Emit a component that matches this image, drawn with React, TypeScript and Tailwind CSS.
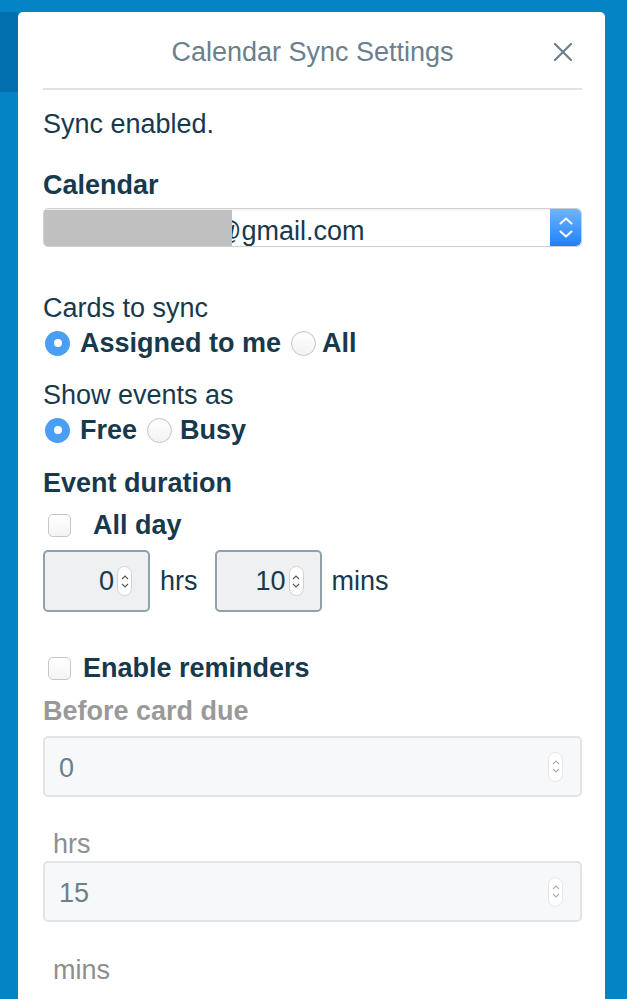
import React from "react";

const Spinner = ({ muted = false }: { muted?: boolean }) => (
  <div
    className={`flex h-[30px] w-[15px] flex-col items-center justify-center gap-[3px] rounded-full border ${
      muted ? "border-[#e4e6e8] bg-white" : "border-[#cfd3d6] bg-white"
    }`}
  >
    <svg width="8" height="5" viewBox="0 0 8 5">
      <path d="M1 4 L4 1 L7 4" fill="none" stroke={muted ? "#a8adb1" : "#555"} strokeWidth="1.1" />
    </svg>
    <svg width="8" height="5" viewBox="0 0 8 5">
      <path d="M1 1 L4 4 L7 1" fill="none" stroke={muted ? "#a8adb1" : "#555"} strokeWidth="1.1" />
    </svg>
  </div>
);

const Radio = ({ checked }: { checked: boolean }) =>
  checked ? (
    <div className="flex h-[25px] w-[25px] shrink-0 items-center justify-center rounded-full bg-[#4a9ff5]">
      <div className="h-[8px] w-[8px] rounded-full bg-white" />
    </div>
  ) : (
    <div className="h-[25px] w-[25px] shrink-0 rounded-full border border-[#c4c4c4] bg-gradient-to-b from-[#ffffff] to-[#f2f2f2] shadow-[inset_0_1px_1px_rgba(0,0,0,0.05)]" />
  );

const Checkbox = () => (
  <div className="h-[23px] w-[23px] shrink-0 rounded-[5px] border border-[#c6c6c6] bg-gradient-to-b from-[#ffffff] to-[#f4f4f4]" />
);

export default function App() {
  return (
    <div
      className="relative h-[999px] w-[627px] overflow-hidden bg-[#0584c5]"
      style={{ fontFamily: '"Liberation Sans", Arial, sans-serif' }}
    >
      <div className="absolute left-0 top-[12px] h-[80px] w-[18px] bg-[#0270ae]" />
      <div className="relative ml-[18px] mt-[12px] h-[1100px] w-[587px] rounded-[5px] bg-white pl-[25px] pr-[23px] text-[27px] text-[#17394d]">
        {/* header */}
        <div className="relative flex h-[78px] items-center justify-center border-b-2 border-[#dfe3e6]">
          <div className="mt-[4px] text-[27px] leading-[34px] text-[#6b808c]">Calendar Sync Settings</div>
          <svg
            className="absolute right-[10px] top-[31px]"
            width="18"
            height="18"
            viewBox="0 0 18 18"
          >
            <path d="M1 1 L17 17 M17 1 L1 17" stroke="#6b808c" strokeWidth="2.2" strokeLinecap="round" />
          </svg>
        </div>

        <div className="mt-[17px] h-[34px] leading-[34px]">Sync enabled.</div>

        <div className="mt-[27px] h-[34px] font-bold leading-[34px]">Calendar</div>

        <div className="mt-[6px] flex h-[39px] overflow-hidden rounded-[5px] border border-[#cfcfcf] bg-white shadow-[inset_0_1px_2px_rgba(0,0,0,0.08)]">
          <div className="relative flex flex-1 items-center">
            <span className="ml-[170px] pt-[6px] leading-[36px]">@gmail.com</span>
            <div className="absolute left-0 top-[1px] h-[36px] w-[188px] bg-[#c0c0c0]" />
          </div>
          <div className="flex w-[31px] flex-col items-center justify-center gap-[5px] rounded-r-[5px] bg-gradient-to-b from-[#6db4fa] to-[#1a80fb]">
            <svg width="14" height="8" viewBox="0 0 14 8">
              <path d="M1.5 6.5 L7 1.5 L12.5 6.5" fill="none" stroke="white" strokeWidth="2" strokeLinecap="round" strokeLinejoin="round" />
            </svg>
            <svg width="14" height="8" viewBox="0 0 14 8">
              <path d="M1.5 1.5 L7 6.5 L12.5 1.5" fill="none" stroke="white" strokeWidth="2" strokeLinecap="round" strokeLinejoin="round" />
            </svg>
          </div>
        </div>

        <div className="mt-[44px] h-[34px] leading-[34px]">Cards to sync</div>
        <div className="mt-[1px] flex h-[34px] items-center pl-[2px] font-bold">
          <Radio checked />
          <span className="ml-[10px]">Assigned to me</span>
          <span className="ml-[10px]">
            <Radio checked={false} />
          </span>
          <span className="ml-[6px]">All</span>
        </div>

        <div className="mt-[18px] h-[34px] leading-[34px]">Show events as</div>
        <div className="mt-[1px] flex h-[34px] items-center pl-[2px] font-bold">
          <Radio checked />
          <span className="ml-[10px]">Free</span>
          <span className="ml-[10px]">
            <Radio checked={false} />
          </span>
          <span className="ml-[8px]">Busy</span>
        </div>

        <div className="mt-[19px] h-[34px] font-bold leading-[34px]">Event duration</div>
        <div className="mt-[8px] flex h-[34px] items-center pl-[5px] font-bold">
          <Checkbox />
          <span className="ml-[22px]">All day</span>
        </div>

        <div className="mt-[8px] flex items-center">
          <div className="flex h-[62px] w-[107px] items-center justify-end rounded-[5px] border-2 border-[#8fa1ac] bg-[#eef0f2] pr-[16px]">
            <span className="mr-[3px]">0</span>
            <Spinner />
          </div>
          <span className="ml-[10px]">hrs</span>
          <div className="ml-[17px] flex h-[62px] w-[107px] items-center justify-end rounded-[5px] border-2 border-[#8fa1ac] bg-[#eef0f2] pr-[16px]">
            <span className="mr-[3px]">10</span>
            <Spinner />
          </div>
          <span className="ml-[10px]">mins</span>
        </div>

        <div className="mt-[39px] flex h-[34px] items-center pl-[5px] font-bold">
          <Checkbox />
          <span className="ml-[12px]">Enable reminders</span>
        </div>

        <div className="mt-[9px] h-[34px] font-bold leading-[34px] text-[#999999]">Before card due</div>

        <div className="mt-[8px] flex h-[61px] items-center justify-between rounded-[5px] border-2 border-[#e1e5e8] bg-[#f7f8f9] pl-[14px] pr-[17px] text-[#6b808c]">
          <span className="pt-[4px]">0</span>
          <Spinner muted />
        </div>

        <div className="mt-[31px] h-[33px] pl-[10px] leading-[33px] text-[#8e8e8e]">hrs</div>

        <div className="flex h-[61px] items-center justify-between rounded-[5px] border-2 border-[#e1e5e8] bg-[#f7f8f9] pl-[14px] pr-[17px] text-[#6b808c]">
          <span className="pt-[4px]">15</span>
          <Spinner muted />
        </div>

        <div className="mt-[31px] h-[34px] pl-[10px] leading-[34px] text-[#8e8e8e]">mins</div>
      </div>
    </div>
  );
}
